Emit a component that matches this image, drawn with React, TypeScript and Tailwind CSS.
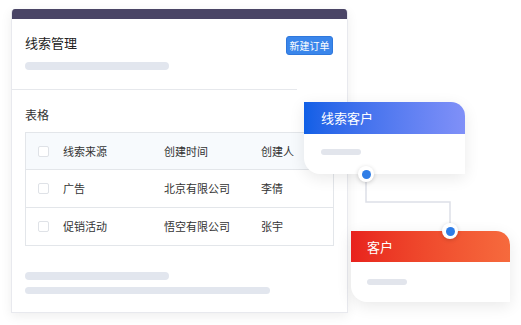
const font = { fontFamily: '"Noto Sans CJK SC", "Noto Sans", sans-serif' };

const rows = [
  { source: '广告', company: '北京有限公司', owner: '李倩' },
  { source: '促销活动', company: '悟空有限公司', owner: '张宇' },
];

function Checkbox() {
  return <div className="mr-[14px] h-[11px] w-[11px] shrink-0 rounded-[2px] border border-[#dfe2e7] bg-white" />;
}

function Dot({ className }: { className: string }) {
  return (
    <div
      className={`absolute flex h-[16px] w-[16px] items-center justify-center rounded-full bg-white shadow-[0_1px_4px_rgba(0,0,0,0.18)] ${className}`}
    >
      <div className="h-[9px] w-[9px] rounded-full bg-[#2f7de6]" />
    </div>
  );
}

export default function App() {
  return (
    <div className="relative h-[325px] w-[521px] overflow-hidden bg-white" style={font}>
      {/* main card */}
      <div className="ml-[11px] mt-[9px] w-[337px] overflow-hidden rounded-t-[4px] border-x border-b border-[#e8e9ee] bg-white shadow-[0_3px_12px_rgba(0,0,0,0.07)]">
        <div className="h-[10px] bg-[#4a4566]" />

        <div className="px-[13px] pt-[17px]">
          <div className="flex items-start justify-between">
            <div className="text-[13px] leading-[13px] text-[#222]">线索管理</div>
            <div className="mr-[1px] flex h-[19px] w-[47px] items-center justify-center rounded-[3px] border border-[#2f78dc] bg-[#3a86eb] text-[10px] text-white">
              新建订单
            </div>
          </div>
          <div className="mb-[19px] mt-[7px] h-[8px] w-[144px] rounded-full bg-[#e2e6ee]" />
        </div>
        <div className="h-px w-[285px] bg-[#e6e8ec]" />

        <div className="px-[13px] pb-[18px] pt-[19px]">
          <div className="text-[12px] leading-[12px] text-[#333]">表格</div>

          <div className="mt-[11px] w-[309px] border border-[#e3e6ea] text-[11px] text-[#333]">
            <div className="flex h-[36px] items-center bg-[#f7fafd] pl-[12px]">
              <Checkbox />
              <div className="w-[101px]">线索来源</div>
              <div className="w-[97px]">创建时间</div>
              <div>创建人</div>
            </div>
            {rows.map((r) => (
              <div key={r.source} className="flex h-[38px] items-center border-t border-[#e3e6ea] pl-[12px]">
                <Checkbox />
                <div className="w-[101px]">{r.source}</div>
                <div className="w-[97px]">{r.company}</div>
                <div>{r.owner}</div>
              </div>
            ))}
          </div>

          <div className="mt-[26px] h-[8px] w-[144px] rounded-full bg-[#e2e6ee]" />
          <div className="mt-[7px] h-[7px] w-[245px] rounded-full bg-[#e2e6ee]" />
        </div>
      </div>

      {/* connector */}
      <svg className="absolute left-0 top-0" width="521" height="325">
        <path d="M366 174 V202 H450 V231" fill="none" stroke="#dde0e7" strokeWidth="1.5" />
      </svg>

      {/* lead customer card */}
      <div className="absolute left-[304px] top-[102px] h-[72px] w-[161px] overflow-hidden rounded-bl-[16px] rounded-tr-[14px] bg-white shadow-[0_4px_16px_rgba(0,0,0,0.09)]">
        <div className="flex h-[32px] items-center bg-gradient-to-r from-[#0f5fe6] to-[#8090f8] pl-[17px] text-[13px] text-white">
          线索客户
        </div>
        <div className="ml-[17px] mt-[15px] h-[6px] w-[40px] rounded-full bg-[#e2e5ec]" />
      </div>

      {/* customer card */}
      <div className="absolute left-[351px] top-[231px] h-[71px] w-[159px] overflow-hidden rounded-bl-[16px] rounded-tr-[14px] bg-white shadow-[0_4px_16px_rgba(0,0,0,0.09)]">
        <div className="flex h-[31px] items-center bg-gradient-to-r from-[#e8211d] to-[#f66a3d] pl-[16px] text-[13px] text-white">
          客户
        </div>
        <div className="ml-[16px] mt-[17px] h-[6px] w-[40px] rounded-full bg-[#e2e5ec]" />
      </div>

      <Dot className="left-[358px] top-[166px]" />
      <Dot className="left-[442px] top-[223px]" />
    </div>
  );
}
